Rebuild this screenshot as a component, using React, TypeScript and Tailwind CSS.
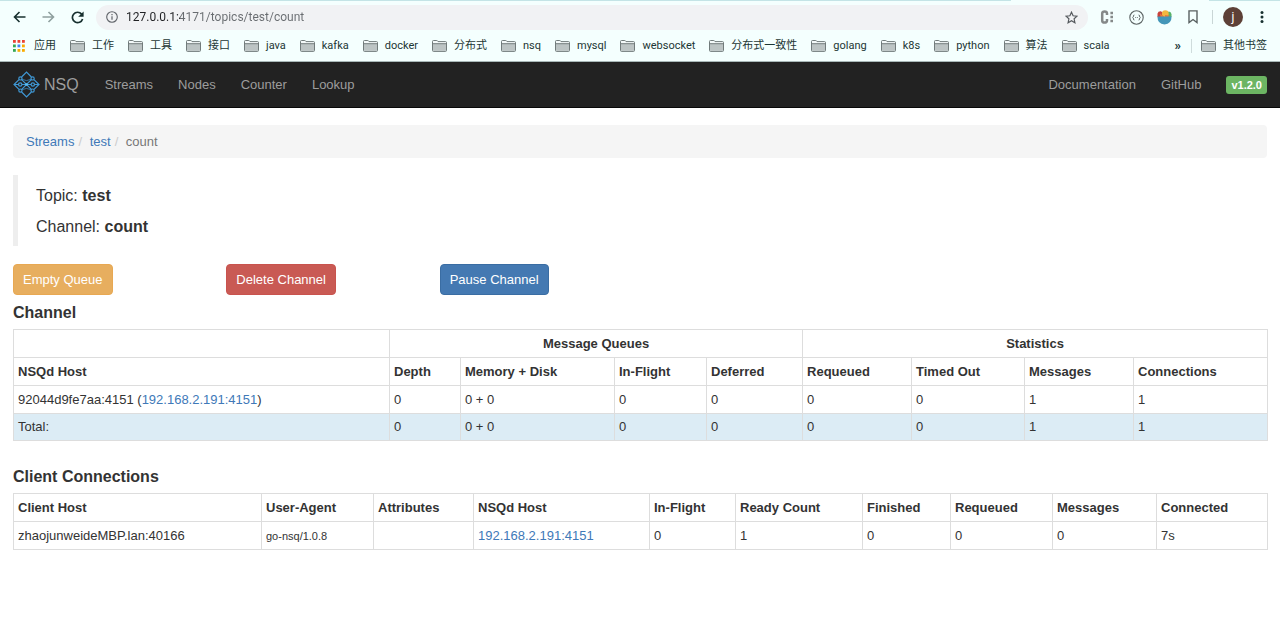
import { useState } from "react";

const FOLDERS = [
  "工作",
  "工具",
  "接口",
  "java",
  "kafka",
  "docker",
  "分布式",
  "nsq",
  "mysql",
  "websocket",
  "分布式一致性",
  "golang",
  "k8s",
  "python",
  "算法",
  "scala",
];

const APP_DOTS = [
  "#ea4335", "#ea4335", "#ea4335",
  "#34a853", "#4285f4", "#f9ab00",
  "#34a853", "#f9ab00", "#f9ab00",
];

const CHANNEL_COLS = [
  { label: "NSQd Host", width: "w-[376px]" },
  { label: "Depth", width: "w-[71px]" },
  { label: "Memory + Disk", width: "w-[154px]" },
  { label: "In-Flight", width: "w-[92px]" },
  { label: "Deferred", width: "w-[96px]" },
  { label: "Requeued", width: "w-[109px]" },
  { label: "Timed Out", width: "w-[113px]" },
  { label: "Messages", width: "w-[109px]" },
  { label: "Connections", width: "w-[134px]" },
];

const CHANNEL_VALUES = ["0", "0 + 0", "0", "0", "0", "0", "1", "1"];

const CLIENT_COLS = [
  { label: "Client Host", width: "w-[248px]" },
  { label: "User-Agent", width: "w-[112px]" },
  { label: "Attributes", width: "w-[100px]" },
  { label: "NSQd Host", width: "w-[176px]" },
  { label: "In-Flight", width: "w-[86px]" },
  { label: "Ready Count", width: "w-[127px]" },
  { label: "Finished", width: "w-[88px]" },
  { label: "Requeued", width: "w-[102px]" },
  { label: "Messages", width: "w-[104px]" },
  { label: "Connected", width: "w-[111px]" },
];

const CELL = "h-7 border border-[#ddd] px-1 text-left";
const TOTAL_CELL = "h-[27px] border border-[#ddd] px-1 text-left";
const LINK = "text-[#4079b8] hover:underline";

function FolderIcon() {
  return (
    <svg width="15" height="12" viewBox="0 0 15 12" className="shrink-0">
      <path
        d="M.5 10.5V1.4q0-.9.9-.9h3.4q.5 0 .8.5l.4.6h7.6q.9 0 .9.9v8q0 .9-.9.9H1.4q-.9 0-.9-.9z"
        fill="#f4fafa"
        stroke="#717b7b"
      />
      <path d="M1 4h13v6.9H1z" fill="#bcc4c4" />
      <path d="M.5 3.7h14" stroke="#717b7b" />
    </svg>
  );
}

function NsqLogo() {
  return (
    <svg width="27" height="27" viewBox="0 0 27 27" fill="none" stroke="#3f97d3" strokeWidth="1.2">
      <path d="M8.6 6l4.9-5 4.9 5M8.6 21l4.9 5 4.9-5" />
      <path d="M6 8.6l-5 4.9 5 4.9M21 8.6l5 4.9-5 4.9" />
      <path d="M8.4 8.4l5.1 5.1 5.1-5.1M8.4 18.6l5.1-5.1 5.1 5.1" />
      <path d="M1 13.5h4.5M8.9 13.5h9.2M21.5 13.5H26" />
      <path d="M8.8 8.2Q13.5 11 18.2 8.2M8.8 18.8Q13.5 16 18.2 18.8" strokeWidth=".7" />
      <circle cx="7.2" cy="13.5" r="1.7" />
      <circle cx="19.8" cy="13.5" r="1.7" />
      <g fill="#222">
        <circle cx="7.4" cy="7.4" r="1.6" />
        <circle cx="19.6" cy="7.4" r="1.6" />
        <circle cx="7.4" cy="19.6" r="1.6" />
        <circle cx="19.6" cy="19.6" r="1.6" />
      </g>
      <circle cx="13.5" cy="13.5" r="1.3" fill="#5cc0f5" stroke="none" />
    </svg>
  );
}

function Toolbar() {
  const [url, setUrl] = useState("127.0.0.1:4171/topics/test/count");

  return (
    <div className="flex h-[34px] items-center pl-[13px] pr-3 text-[#1f3b3b]">
      <button aria-label="Back" className="mr-4">
        <svg width="13" height="12" viewBox="0 0 13 12" fill="none" stroke="#17302f" strokeWidth="1.6">
          <path d="M12.5 6H1.5M6.5 1 1.5 6l5 5" />
        </svg>
      </button>
      <button aria-label="Forward" className="mr-4">
        <svg width="13" height="12" viewBox="0 0 13 12" fill="none" stroke="#8fa09f" strokeWidth="1.6">
          <path d="M.5 6h11M6.5 1l5 5-5 5" />
        </svg>
      </button>
      <button aria-label="Reload" className="mr-3">
        <svg width="13" height="13" viewBox="0 0 13 13">
          <path d="M10.6 3.1A5.2 5.2 0 1 0 11.6 8" fill="none" stroke="#17302f" strokeWidth="1.7" />
          <path d="M12.6.4v5.4H7.2z" fill="#17302f" />
        </svg>
      </button>

      <div className="flex h-[25px] flex-1 items-center rounded-full bg-[#f1f2f4] px-[10px]">
        <svg width="12" height="12" viewBox="0 0 12 12" className="mr-2 shrink-0">
          <circle cx="6" cy="6" r="5.3" fill="none" stroke="#5f6368" strokeWidth="1.1" />
          <path d="M6 5.2v3.6M6 3v1.3" stroke="#5f6368" strokeWidth="1.2" />
        </svg>
        <input
          aria-label="Address"
          value={url}
          onChange={(e) => setUrl(e.target.value)}
          className="min-w-0 flex-1 bg-[linear-gradient(90deg,#202124_54px,#686c70_54px)] bg-clip-text font-[Roboto,sans-serif] text-[12px] text-transparent caret-black outline-none"
        />
        <button aria-label="Bookmark this page">
          <svg width="13" height="13" viewBox="0 0 13 13" fill="none" stroke="#55595d" strokeWidth="1.2">
            <path d="m6.5 1.2 1.6 3.6 3.9.4-2.9 2.6.8 3.9-3.4-2-3.4 2 .8-3.9L1 5.2l3.9-.4z" />
          </svg>
        </button>
      </div>

      <div className="ml-3 flex items-center">
        <button aria-label="Code extension" className="mr-[15px]">
          <svg width="14" height="14" viewBox="0 0 14 14" fill="none" stroke="#858989">
            <path d="M7 5V3.6Q7 1.5 4.6 1.5T2.2 3.6v6.8q0 2.1 2.4 2.1T7 10.4V9" strokeWidth="2.5" />
            <path d="M10.4 3h2.6M10.4 7h2.6M10.4 11h2.6" strokeWidth="2.4" />
          </svg>
        </button>
        <button aria-label="JSON extension" className="mr-[13px]">
          <svg width="15" height="15" viewBox="0 0 15 15" fill="none" stroke="#5e6666">
            <circle cx="7.5" cy="7.5" r="6.7" strokeWidth="1.1" />
            <path d="M5.4 5q-1 0-1 1v.8l-.8.7.8.7V9q0 1 1 1M9.6 5q1 0 1 1v.8l.8.7-.8.7V9q0 1-1 1" />
            <path d="M6.3 7.5h.8M7.9 7.5h.8" />
          </svg>
        </button>
        <button aria-label="Salad extension" className="mr-4">
          <svg width="15" height="15" viewBox="0 0 15 15">
            <path d="M.5 7V3.5Q1 1 4 1.2L7 4v3z" fill="#c9433c" />
            <path d="M9 7V3l3-1.500q2.500.5 2.500 3V7z" fill="#58b368" />
            <circle cx="8.3" cy="3.7" r="3.4" fill="#f3b63f" />
            <path d="M3 3.5 7.5 7h-4zM8 5l4.500.5L11 7H8z" fill="#e8793a" />
            <path d="M.4 6.6h14.2q0 7.400-7.100 8Q.4 14 .4 6.6z" fill="#4496b8" />
          </svg>
        </button>
        <button aria-label="Reading list" className="mr-[14px]">
          <svg width="10" height="14" viewBox="0 0 10 14" fill="none" stroke="#596161" strokeWidth="1.4">
            <path d="M1 .9h8v11.600L5 9.500l-4 3z" />
          </svg>
        </button>
        <span className="mr-[10px] h-[14px] w-px bg-[#c9d6d6]" />
        <button className="mr-[17px] size-5 rounded-full bg-[#5d4037] font-[Roboto,sans-serif] text-[12px] leading-5 text-white">
          j
        </button>
        <button aria-label="Menu" className="mr-1">
          <svg width="4" height="14" viewBox="0 0 4 14" fill="#17302f">
            <circle cx="2" cy="2.5" r="1.5" />
            <circle cx="2" cy="7" r="1.5" />
            <circle cx="2" cy="11.5" r="1.5" />
          </svg>
        </button>
      </div>
    </div>
  );
}

function BookmarksBar() {
  return (
    <div className="flex h-6 items-center gap-[14px] px-[13px] font-[Roboto,'Noto_Sans_CJK_SC',sans-serif] text-[11px] leading-4 text-[#1c3634]">
      <button className="flex items-center gap-[9px]">
        <svg width="12" height="12" viewBox="0 0 12 12">
          {APP_DOTS.map((color, i) => (
            <rect key={i} x={(i % 3) * 4.5} y={Math.floor(i / 3) * 4.5} width="2.8" height="2.8" fill={color} />
          ))}
        </svg>
        应用
      </button>
      {FOLDERS.map((name) => (
        <button key={name} className="flex items-center gap-[7px] whitespace-nowrap">
          <FolderIcon />
          {name}
        </button>
      ))}
      <button aria-label="More bookmarks" className="ml-auto text-[13px] font-bold">
        »
      </button>
      <div className="-ml-1 flex items-center gap-[9px]">
        <span className="h-[14px] w-px bg-[#cfdcdc]" />
        <button className="flex items-center gap-[7px] whitespace-nowrap">
          <FolderIcon />
          其他书签
        </button>
      </div>
    </div>
  );
}

function Navbar() {
  return (
    <nav className="flex h-[46px] items-center border-b border-[#080808] bg-[#222] px-[13px] text-[13px] text-[#9d9d9d]">
      <a href="#" className="mr-[26px] flex items-center gap-1 text-[16px]">
        <NsqLogo />
        NSQ
      </a>
      <div className="flex flex-1 gap-[25px]">
        <a href="#">Streams</a>
        <a href="#">Nodes</a>
        <a href="#">Counter</a>
        <a href="#">Lookup</a>
      </div>
      <div className="flex items-center gap-[25px]">
        <a href="#">Documentation</a>
        <a href="#">GitHub</a>
        <span className="rounded-[3px] bg-[#6cb563] px-[5px] text-[11px] font-bold leading-[18px] text-white">
          v1.2.0
        </span>
      </div>
    </nav>
  );
}

function ChannelTable() {
  return (
    <table className="w-full table-fixed border-collapse">
      <colgroup>
        {CHANNEL_COLS.map((c) => (
          <col key={c.label} className={c.width} />
        ))}
      </colgroup>
      <thead>
        <tr>
          <th className={CELL}></th>
          <th colSpan={4} className="h-7 border border-[#ddd] text-center">Message Queues</th>
          <th colSpan={4} className="h-7 border border-[#ddd] text-center">Statistics</th>
        </tr>
        <tr>
          {CHANNEL_COLS.map((c) => (
            <th key={c.label} className={CELL}>{c.label}</th>
          ))}
        </tr>
      </thead>
      <tbody>
        <tr>
          <td className={CELL}>
            92044d9fe7aa:4151 (<a href="#" className={LINK}>192.168.2.191:4151</a>)
          </td>
          {CHANNEL_VALUES.map((v, i) => (
            <td key={i} className={CELL}>{v}</td>
          ))}
        </tr>
        <tr className="bg-[#dcecf5]">
          <td className={TOTAL_CELL}>Total:</td>
          {CHANNEL_VALUES.map((v, i) => (
            <td key={i} className={TOTAL_CELL}>{v}</td>
          ))}
        </tr>
      </tbody>
    </table>
  );
}

function ClientTable() {
  return (
    <table className="w-full table-fixed border-collapse">
      <colgroup>
        {CLIENT_COLS.map((c) => (
          <col key={c.label} className={c.width} />
        ))}
      </colgroup>
      <thead>
        <tr>
          {CLIENT_COLS.map((c) => (
            <th key={c.label} className={CELL}>{c.label}</th>
          ))}
        </tr>
      </thead>
      <tbody>
        <tr>
          <td className={CELL}>zhaojunweideMBP.lan:40166</td>
          <td className={CELL}>
            <small className="text-[11px]">go-nsq/1.0.8</small>
          </td>
          <td className={CELL}></td>
          <td className={CELL}>
            <a href="#" className={LINK}>192.168.2.191:4151</a>
          </td>
          <td className={CELL}>0</td>
          <td className={CELL}>1</td>
          <td className={CELL}>0</td>
          <td className={CELL}>0</td>
          <td className={CELL}>0</td>
          <td className={CELL}>7s</td>
        </tr>
      </tbody>
    </table>
  );
}

export default function App() {
  return (
    <div className="min-h-screen bg-white font-['Liberation_Sans',Arial,sans-serif] text-[13px] leading-[18px] text-[#333]">
      {/* Browser chrome */}
      <header className="border-b border-[#a9b8b8] bg-[#f4fffe] pb-[3px]">
        {/* Bottom edge of the tab strip, open under the active tab */}
        <div className="-mb-px flex h-px justify-between">
          <span className="w-[79%] bg-[#c4e4e6]" />
          <span className="w-[71px] bg-[#c4e4e6]" />
        </div>
        <Toolbar />
        <BookmarksBar />
      </header>

      <Navbar />

      <main className="px-[13px] pt-[17px]">
        <ol className="mb-[17px] flex h-[33px] items-center rounded bg-[#f5f5f5] px-[13px]">
          <li><a href="#" className={LINK}>Streams</a></li>
          <li><span className="px-1 text-[#ccc]">/</span> <a href="#" className={LINK}>test</a></li>
          <li className="text-[#777]"><span className="px-1 text-[#ccc]">/</span> count</li>
        </ol>

        <blockquote className="mb-[18px] border-l-5 border-[#eee] pb-2 pl-[18px] pt-[10px] text-[16px] leading-[22px]">
          <p className="mb-[9px]">Topic: <strong>test</strong></p>
          <p>Channel: <strong>count</strong></p>
        </blockquote>

        <div className="-mr-[26px] grid grid-cols-6 text-white">
          <div>
            <button className="h-[31px] rounded border border-[#e8a852] bg-[#e7ae5f] px-[9px]">Empty Queue</button>
          </div>
          <div>
            <button className="h-[31px] rounded border border-[#c9534e] bg-[#c95a54] px-[9px]">Delete Channel</button>
          </div>
          <div>
            <button className="h-[31px] rounded border border-[#3a6da3] bg-[#4479b2] px-[9px]">Pause Channel</button>
          </div>
        </div>

        <h4 className="mb-[6px] mt-2 text-[16px] font-bold leading-[20px]">Channel</h4>
        <ChannelTable />

        <h4 className="mb-[6px] mt-[26px] text-[16px] font-bold leading-[20px]">Client Connections</h4>
        <ClientTable />
      </main>
    </div>
  );
}
